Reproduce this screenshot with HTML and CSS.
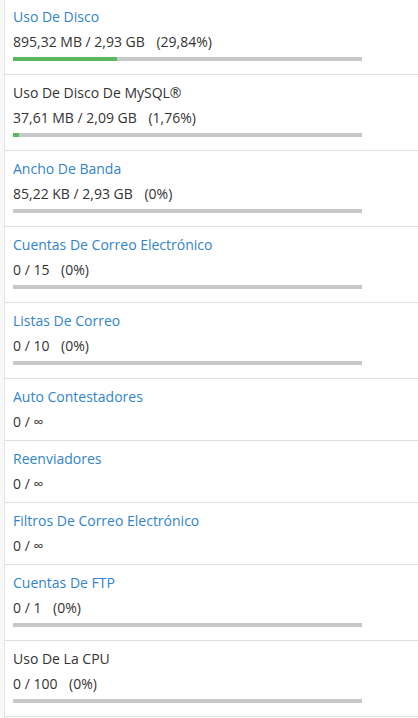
FILE: index.html
```html
<!DOCTYPE html>
<html lang="es">
<head>
    <meta charset="UTF-8">
    <meta name="viewport" content="width=device-width, initial-scale=1.0">
    <title>Estadísticas</title>
    <link rel="stylesheet" href="styles.css">
</head>
<body>
    <div class="stats-panel">
        <div class="stat-row">
            <a href="#" class="stat-title">Uso De Disco</a>
            <div class="stat-value">895,32 MB / 2,93 GB <span class="stat-percent">(29,84%)</span></div>
            <div class="stat-bar"><div class="stat-fill" style="width: 29.84%"></div></div>
        </div>
        <div class="stat-row">
            <span class="stat-title plain">Uso De Disco De MySQL®</span>
            <div class="stat-value">37,61 MB / 2,09 GB <span class="stat-percent">(1,76%)</span></div>
            <div class="stat-bar"><div class="stat-fill" style="width: 1.76%"></div></div>
        </div>
        <div class="stat-row">
            <a href="#" class="stat-title">Ancho De Banda</a>
            <div class="stat-value">85,22 KB / 2,93 GB <span class="stat-percent">(0%)</span></div>
            <div class="stat-bar"><div class="stat-fill" style="width: 0%"></div></div>
        </div>
        <div class="stat-row">
            <a href="#" class="stat-title">Cuentas De Correo Electrónico</a>
            <div class="stat-value">0 / 15 <span class="stat-percent">(0%)</span></div>
            <div class="stat-bar"><div class="stat-fill" style="width: 0%"></div></div>
        </div>
        <div class="stat-row">
            <a href="#" class="stat-title">Listas De Correo</a>
            <div class="stat-value">0 / 10 <span class="stat-percent">(0%)</span></div>
            <div class="stat-bar"><div class="stat-fill" style="width: 0%"></div></div>
        </div>
        <div class="stat-row">
            <a href="#" class="stat-title">Auto Contestadores</a>
            <div class="stat-value">0 / ∞</div>
        </div>
        <div class="stat-row">
            <a href="#" class="stat-title">Reenviadores</a>
            <div class="stat-value">0 / ∞</div>
        </div>
        <div class="stat-row">
            <a href="#" class="stat-title">Filtros De Correo Electrónico</a>
            <div class="stat-value">0 / ∞</div>
        </div>
        <div class="stat-row">
            <a href="#" class="stat-title">Cuentas De FTP</a>
            <div class="stat-value">0 / 1 <span class="stat-percent">(0%)</span></div>
            <div class="stat-bar"><div class="stat-fill" style="width: 0%"></div></div>
        </div>
        <div class="stat-row">
            <span class="stat-title plain">Uso De La CPU</span>
            <div class="stat-value">0 / 100 <span class="stat-percent">(0%)</span></div>
            <div class="stat-bar"><div class="stat-fill" style="width: 0%"></div></div>
        </div>
    </div>
</body>
</html>
```

FILE: styles.css
```css
/* General Styling */
body {
    font-family: "Open Sans", "Noto Sans", Arial, sans-serif;
    font-size: 14px;
    color: #333;
    margin: 0;
    padding: 0 0 0 4px;
    background-color: #f8f8f8;
}

.stats-panel {
    background-color: #fff;
    border-left: 1px solid #e4e4e4;
    min-height: 718px;
}

.stat-row {
    padding: 8px 0 8px 8px;
    border-bottom: 1px solid #dedede;
}

.stat-row:first-child {
    padding-top: 7px;
}

.stat-title {
    display: block;
    line-height: 20px;
    color: #3184cc;
    text-decoration: none;
}

.stat-title.plain {
    color: #333;
}

.stat-value {
    margin-top: 5px;
    line-height: 20px;
}

.stat-percent {
    margin-left: 8px;
}

.stat-bar {
    width: 349px;
    height: 4px;
    margin: 5px 0;
    background-color: #c8c8c8;
}

.stat-fill {
    height: 100%;
    background-color: #5cb85c;
}
```
